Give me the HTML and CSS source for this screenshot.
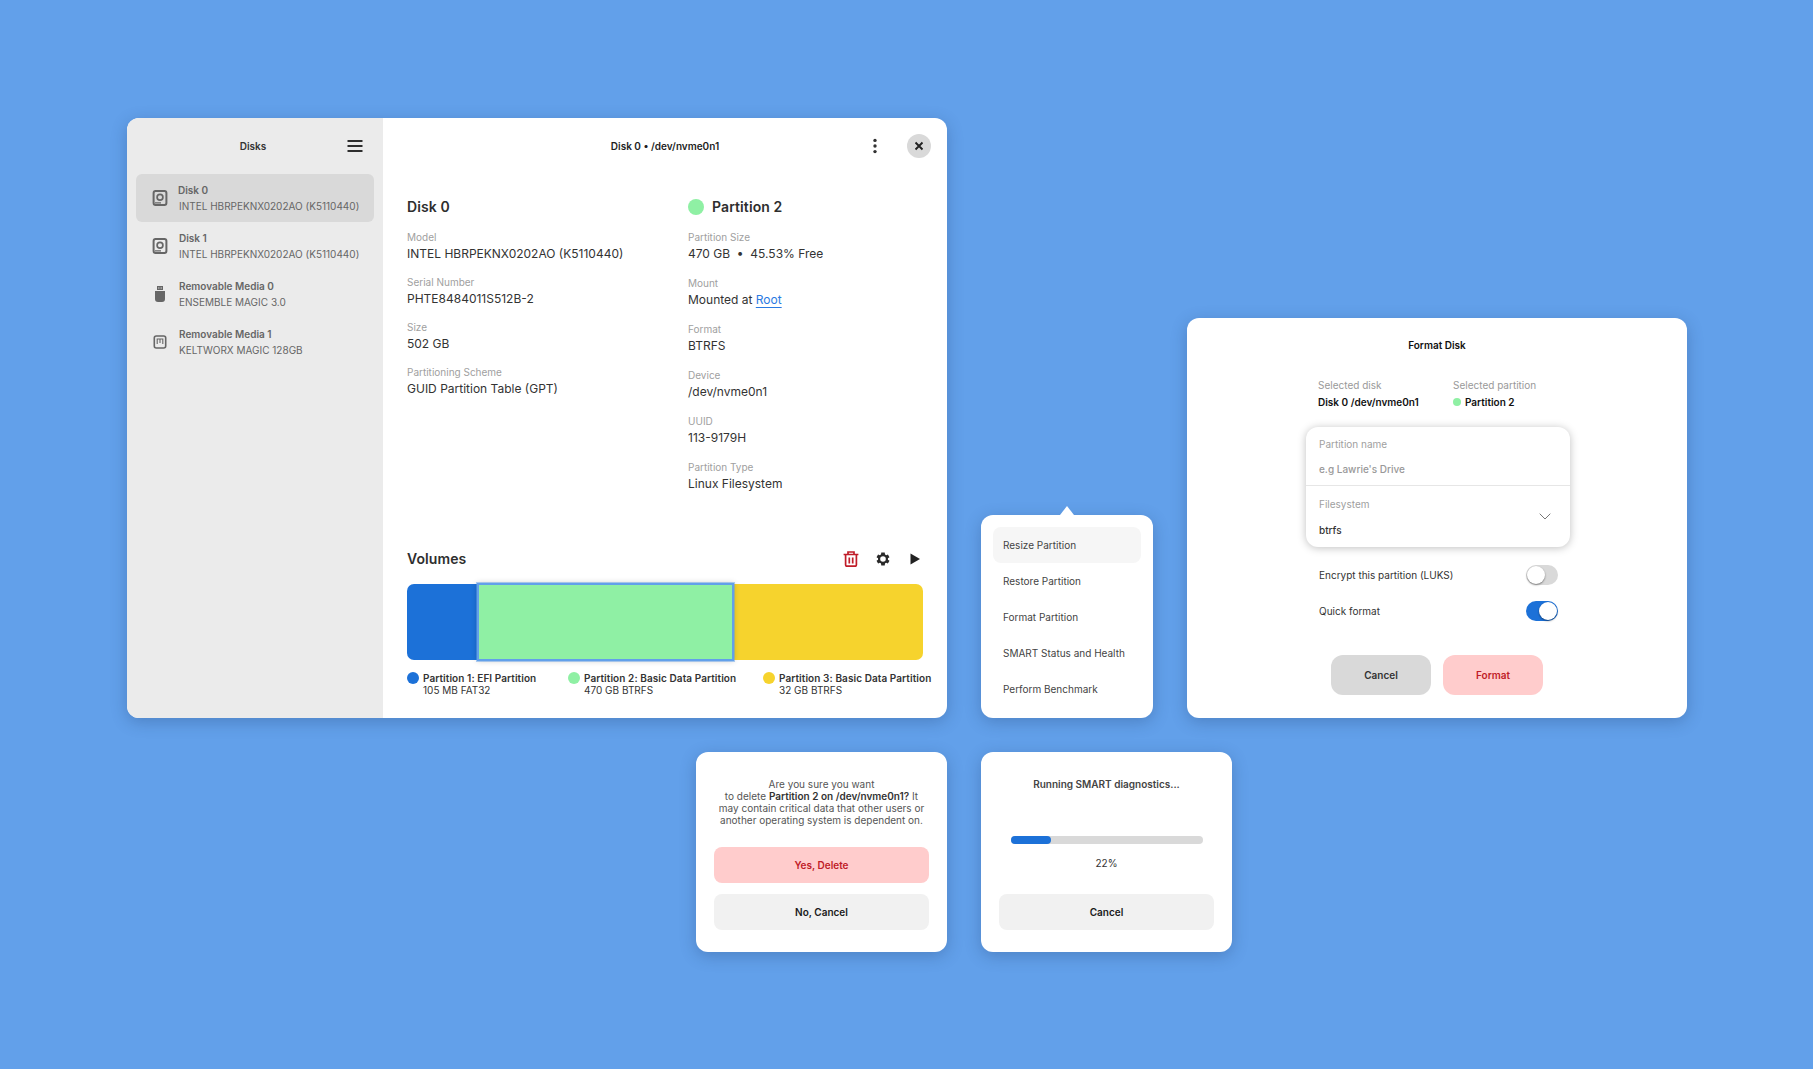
FILE: index.html
```html
<!DOCTYPE html>
<html>
  <head>
    <title>Disks</title>
    <link rel="stylesheet" href="styles.css">
  </head>
  <body>
    <div class="canvas">

      <!-- main window -->
      <div class="window main-window">
        <aside class="sidebar">
          <div class="sidebar-head">
            <span class="sidebar-title">Disks</span>
            <svg class="hamburger" width="16" height="14" viewBox="0 0 16 14"><path d="M.5 2h15M.5 7h15M.5 12h15" stroke="#2e2e2e" stroke-width="1.8" fill="none"/></svg>
          </div>
          <div class="disk-item selected">
            <svg class="disk-icon" width="16" height="16" viewBox="0 0 16 16"><rect x="1.6" y="1" width="12.800" height="14" rx="2" fill="none" stroke="#666" stroke-width="2"/><circle cx="8" cy="7.200" r="2.900" fill="none" stroke="#666" stroke-width="1.700"/><path d="M3 12.800h6" stroke="#666" stroke-width="1.200"/></svg>
            <div class="disk-text"><b>Disk 0</b><span>INTEL HBRPEKNX0202AO (K5110440)</span></div>
          </div>
          <div class="disk-item">
            <svg class="disk-icon" width="16" height="16" viewBox="0 0 16 16"><rect x="1.6" y="1" width="12.800" height="14" rx="2" fill="none" stroke="#666" stroke-width="2"/><circle cx="8" cy="7.200" r="2.900" fill="none" stroke="#666" stroke-width="1.700"/><path d="M3 12.800h6" stroke="#666" stroke-width="1.200"/></svg>
            <div class="disk-text"><b>Disk 1</b><span>INTEL HBRPEKNX0202AO (K5110440)</span></div>
          </div>
          <div class="disk-item">
            <svg class="disk-icon" width="16" height="16" viewBox="0 0 16 16"><path d="M5 0h6v4H5z" fill="#666"/><path d="M6.200 1.400h1.200v1.200H6.200zM8.600 1.400h1.200v1.200H8.600z" fill="#ebebeb"/><path d="M3 5h10v8a3 3 0 0 1-3 3H6a3 3 0 0 1-3-3z" fill="#666"/></svg>
            <div class="disk-text"><b>Removable Media 0</b><span>ENSEMBLE MAGIC 3.0</span></div>
          </div>
          <div class="disk-item">
            <svg class="disk-icon" width="16" height="16" viewBox="0 0 16 16"><rect x="2.300" y="2" width="11.400" height="12" rx="2" fill="none" stroke="#666" stroke-width="1.600"/><path d="M5.200 10V5h5.600v5M8 5v4" fill="none" stroke="#666" stroke-width="1.100"/></svg>
            <div class="disk-text"><b>Removable Media 1</b><span>KELTWORX MAGIC 128GB</span></div>
          </div>
        </aside>

        <section class="pane">
          <header class="pane-head">
            <span class="pane-title">Disk 0 • /dev/nvme0n1</span>
            <svg class="kebab" width="4" height="16" viewBox="0 0 4 16"><circle cx="2" cy="2.400" r="1.700" fill="#333"/><circle cx="2" cy="8" r="1.700" fill="#333"/><circle cx="2" cy="13.600" r="1.700" fill="#333"/></svg>
            <span class="close-btn"><svg width="10" height="10" viewBox="0 0 10 10"><path d="M1.500 1.500l7 7M8.500 1.500l-7 7" stroke="#222" stroke-width="1.900" fill="none"/></svg></span>
          </header>

          <div class="details">
            <div class="col col-disk">
              <h2>Disk 0</h2>
              <div class="field"><label>Model</label><p>INTEL HBRPEKNX0202AO (K5110440)</p></div>
              <div class="field"><label>Serial Number</label><p>PHTE8484011S512B-2</p></div>
              <div class="field"><label>Size</label><p>502 GB</p></div>
              <div class="field"><label>Partitioning Scheme</label><p>GUID Partition Table (GPT)</p></div>
            </div>
            <div class="col col-part">
              <h2><i class="dot dot-big green"></i>Partition 2</h2>
              <div class="field"><label>Partition Size</label><p>470 GB &nbsp;•&nbsp; 45.53% Free</p></div>
              <div class="field"><label>Mount</label><p>Mounted at <a href="#">Root</a></p></div>
              <div class="field"><label>Format</label><p>BTRFS</p></div>
              <div class="field"><label>Device</label><p>/dev/nvme0n1</p></div>
              <div class="field"><label>UUID</label><p>113-9179H</p></div>
              <div class="field"><label>Partition Type</label><p>Linux Filesystem</p></div>
            </div>
          </div>

          <div class="volumes">
            <div class="volumes-head">
              <h2>Volumes</h2>
              <svg width="16" height="16" viewBox="0 0 16 16"><path d="M.6 3.500h14.800M5 3.200V1h6v2.200M2.600 3.500v10.300A1.400 1.400 0 0 0 4 15.200h8a1.400 1.400 0 0 0 1.400-1.400V3.500M6.300 6.500v6M9.700 6.500v6" fill="none" stroke="#c01c28" stroke-width="1.700"/></svg>
              <svg width="16" height="16" viewBox="0 0 24 24"><path fill="#2a2a2a" d="M19.400 13a7.500 7.500 0 0 0 0-2l2.300-1.800-2.300-4-2.700 1.100a7.500 7.500 0 0 0-1.700-1l-.4-2.900H9.400L9 5.300a7.500 7.500 0 0 0-1.700 1L4.600 5.200l-2.300 4L4.600 11a7.500 7.500 0 0 0 0 2l-2.300 1.800 2.300 4 2.700-1.100a7.500 7.500 0 0 0 1.700 1l.4 2.900h5.200l.4-2.900a7.500 7.500 0 0 0 1.700-1l2.700 1.100 2.300-4zM12 16.200a4.200 4.200 0 1 1 0-8.400 4.200 4.200 0 0 1 0 8.400z"/></svg>
              <svg width="16" height="16" viewBox="0 0 16 16"><path d="M3.500 2.500v11L13 8z" fill="#222"/></svg>
            </div>
            <div class="bar">
              <div class="bar-seg seg-blue"></div>
              <div class="bar-seg seg-green"></div>
              <div class="bar-seg seg-yellow"></div>
            </div>
            <div class="legend">
              <div class="legend-item"><i class="dot blue"></i><div><b>Partition 1: EFI Partition</b><span>105 MB FAT32</span></div></div>
              <div class="legend-item"><i class="dot green"></i><div><b>Partition 2: Basic Data Partition</b><span>470 GB BTRFS</span></div></div>
              <div class="legend-item"><i class="dot yellow"></i><div><b>Partition 3: Basic Data Partition</b><span>32 GB BTRFS</span></div></div>
            </div>
          </div>
        </section>
      </div>

      <!-- popover menu -->
      <div class="window popover">
        <div class="menu-item active">Resize Partition</div>
        <div class="menu-item">Restore Partition</div>
        <div class="menu-item">Format Partition</div>
        <div class="menu-item">SMART Status and Health</div>
        <div class="menu-item">Perform Benchmark</div>
      </div>

      <!-- format dialog -->
      <div class="window format-dialog">
        <div class="dialog-title">Format Disk</div>
        <div class="selected-row">
          <div class="selected-col sel-disk"><label>Selected disk</label><b>Disk 0 /dev/nvme0n1</b></div>
          <div class="selected-col"><label>Selected partition</label><b><i class="dot dot-small green"></i>Partition 2</b></div>
        </div>
        <div class="form-card">
          <div class="form-row">
            <label>Partition name</label>
            <span class="placeholder">e.g Lawrie's Drive</span>
          </div>
          <div class="form-row form-select">
            <label>Filesystem</label>
            <span class="form-value">btrfs</span>
            <svg class="chevron" width="12" height="7" viewBox="0 0 12 7"><path d="M.7.7L6 6l5.300-5.300" fill="none" stroke="#777" stroke-width="1"/></svg>
          </div>
        </div>
        <div class="toggle-row"><span>Encrypt this partition (LUKS)</span><i class="toggle"></i></div>
        <div class="toggle-row"><span>Quick format</span><i class="toggle on"></i></div>
        <div class="format-actions">
          <button class="btn btn-grey">Cancel</button>
          <button class="btn btn-danger">Format</button>
        </div>
      </div>

      <!-- delete confirm -->
      <div class="window small-dialog delete-dialog">
        <p class="confirm-text">Are you sure you want<br>to delete <b>Partition 2 on /dev/nvme0n1?</b> It may contain critical data that other users or another operating system is dependent on.</p>
        <button class="btn btn-danger btn-wide">Yes, Delete</button>
        <button class="btn btn-light btn-wide">No, Cancel</button>
      </div>

      <!-- smart progress -->
      <div class="window small-dialog smart-dialog">
        <p class="smart-title">Running SMART diagnostics...</p>
        <div class="progress"><div class="progress-fill" style="width: 21%"></div></div>
        <p class="progress-label">22%</p>
        <button class="btn btn-light btn-wide">Cancel</button>
      </div>

    </div>
  </body>
</html>
```

FILE: styles.css
```css
* {
  box-sizing: border-box;
}

body {
  margin: 0;
  background-color: #62A0EA;
  font-family: Inter, "Noto Sans", sans-serif;
  overflow: hidden;
}

.canvas {
  position: relative;
  width: 1813px;
  height: 1069px;
}

.window {
  position: absolute;
  background: #fff;
  border-radius: 12px;
  box-shadow: 0 4px 16px rgba(30, 60, 110, 0.3);
}

/* main window */
.main-window {
  left: 127px;
  top: 118px;
  width: 820px;
  height: 600px;
  display: flex;
  overflow: hidden;
}

.sidebar {
  width: 256px;
  background: #ebebeb;
  padding: 0 9px;
}

.sidebar-head {
  height: 56px;
  display: flex;
  align-items: center;
  justify-content: center;
  position: relative;
}

.sidebar-title {
  font-size: 10px;
  font-weight: 600;
  color: #333;
  margin-right: 4px;
}

.hamburger {
  position: absolute;
  right: 11px;
  top: 21px;
}

.disk-item {
  height: 48px;
  display: flex;
  align-items: center;
  border-radius: 6px;
  padding-left: 16px;
  color: #666;
}

.disk-item.selected {
  background: #d9d9d9;
}

.disk-icon {
  flex: none;
}

.disk-text {
  margin-left: 11px;
  display: flex;
  flex-direction: column;
  gap: 4px;
}

.disk-text b {
  font-size: 10px;
  line-height: 12px;
  font-weight: 600;
}

.disk-item.selected b {
  margin-left: -1px;
}

.disk-text span {
  font-size: 10px;
  line-height: 12px;
}

.pane {
  flex: 1;
  padding: 0 24px;
  display: flex;
  flex-direction: column;
}

.pane-head {
  height: 56px;
  display: flex;
  align-items: center;
  position: relative;
  justify-content: center;
}

.pane-title {
  font-size: 10px;
  font-weight: 600;
  color: #1e1e1e;
}

.kebab {
  position: absolute;
  right: 46px;
  top: 20px;
}

.close-btn {
  position: absolute;
  right: -8px;
  top: 16px;
  width: 24px;
  height: 24px;
  border-radius: 50%;
  background: #d9d9d9;
  display: flex;
  align-items: center;
  justify-content: center;
}

.details {
  display: flex;
  margin-top: 23px;
  height: 352px;
}

.col-disk {
  width: 281px;
}

h2 {
  margin: 0;
  font-size: 14px;
  line-height: 20px;
  font-weight: 600;
  letter-spacing: 0.1px;
  color: #2e2e2e;
  display: flex;
  align-items: center;
}

.col h2 {
  margin-bottom: 13px;
}

.field {
  margin-bottom: 12px;
}

.col-part .field {
  margin-bottom: 13px;
}

.field label {
  display: block;
  font-size: 10px;
  line-height: 14px;
  color: #a0a0a0;
}

.field p {
  margin: 1px 0 0;
  font-size: 12px;
  line-height: 18px;
  color: #333;
}

.field a {
  color: #2a7ae2;
  text-decoration: underline;
  text-decoration-thickness: 1px;
  text-underline-offset: 3px;
}

.dot {
  display: block;
  flex: none;
  width: 12px;
  height: 12px;
  border-radius: 50%;
}

.dot-big {
  width: 16px;
  height: 16px;
  margin-right: 8px;
}

.dot-small {
  width: 8px;
  height: 8px;
  margin-right: 4px;
}

.green { background: #8ff0a4; }
.blue { background: #1c71d8; }
.yellow { background: #f6d32d; }

.volumes-head {
  display: flex;
  align-items: center;
  height: 20px;
}

.volumes-head h2 {
  flex: 1;
}

.volumes-head svg {
  margin-left: 16px;
}

.bar {
  margin-top: 15px;
  height: 76px;
  display: flex;
}

.bar-seg {
  height: 100%;
}

.seg-blue {
  width: 70px;
  background: #1c71d8;
  border-radius: 7px 0 0 7px;
}

.seg-green {
  width: 257px;
  height: 78px;
  margin-top: -1px;
  background: #8ff0a4;
  border: 2px solid #62a0ea;
  box-shadow: 0 0 0 1px rgba(98, 160, 234, 0.5), 0 0 6px rgba(0, 0, 0, 0.2);
  position: relative;
}

.seg-yellow {
  flex: 1;
  background: #f6d32d;
  border-radius: 0 7px 7px 0;
}

.legend {
  display: grid;
  grid-template-columns: 161px 195px auto;
  margin-top: 12px;
  margin-right: -12px;
}

.legend-item {
  display: flex;
  gap: 4px;
  color: #333;
}

.legend-item b {
  display: block;
  font-size: 10px;
  line-height: 12px;
  font-weight: 600;
  letter-spacing: 0.08px;
}

.legend-item span {
  display: block;
  font-size: 10px;
  line-height: 12px;
}

/* popover */
.popover {
  left: 981px;
  top: 515px;
  width: 172px;
  height: 203px;
  padding: 12px;
}

.popover::before {
  content: "";
  position: absolute;
  left: 79px;
  top: -9px;
  border-left: 7px solid transparent;
  border-right: 7px solid transparent;
  border-bottom: 9px solid #fff;
}

.menu-item {
  height: 36px;
  border-radius: 8px;
  padding-left: 10px;
  display: flex;
  align-items: center;
  font-size: 10px;
  color: #444;
}

.menu-item.active {
  background: #f6f6f6;
}

/* format dialog */
.format-dialog {
  left: 1187px;
  top: 318px;
  width: 500px;
  height: 400px;
  padding: 20px 0 0 131px;
}

.dialog-title {
  font-size: 10px;
  font-weight: 600;
  line-height: 14px;
  color: #111;
  margin-left: -131px;
  text-align: center;
}

.selected-row {
  display: flex;
  margin-top: 26px;
}

.sel-disk {
  width: 135px;
}

.selected-col label {
  display: block;
  font-size: 10px;
  line-height: 14px;
  color: #999;
}

.selected-col b {
  display: flex;
  align-items: center;
  margin-top: 3px;
  font-size: 10px;
  line-height: 14px;
  font-weight: 600;
  color: #111;
}

.form-card {
  width: 264px;
  margin: 18px 0 0 -12px;
  border-radius: 12px;
  box-shadow: 0 1px 8px rgba(0, 0, 0, 0.25);
}

.form-row {
  position: relative;
  padding: 11px 13px 0;
  height: 61px;
}

.form-row:first-child {
  height: 59px;
  padding-top: 10px;
  border-bottom: 1px solid #e6e6e6;
}

.form-row label {
  display: block;
  font-size: 10px;
  line-height: 14px;
  color: #a0a0a0;
}

.placeholder,
.form-value {
  display: block;
  margin-top: 11px;
  font-size: 10px;
  line-height: 14px;
  font-weight: 500;
  color: #999;
}

.form-value {
  margin-top: 12px;
  color: #333;
}

.chevron {
  position: absolute;
  right: 19px;
  top: 27px;
}

.toggle-row {
  width: 239px;
  height: 20px;
  margin: 18px 0 0 1px;
  display: flex;
  align-items: center;
  justify-content: space-between;
  font-size: 10px;
  color: #333;
}

.toggle-row + .toggle-row {
  margin-top: 16px;
}

.toggle {
  display: block;
  position: relative;
  width: 32px;
  height: 20px;
  border-radius: 10px;
  background: #d9d9d9;
}

.toggle::after {
  content: "";
  position: absolute;
  left: 1px;
  top: 1px;
  width: 18px;
  height: 18px;
  border-radius: 50%;
  background: #fff;
  box-shadow: 0 1px 2px rgba(0, 0, 0, 0.45);
}

.toggle.on {
  background: #1c71d8;
}

.toggle.on::after {
  left: 13px;
}

.format-actions {
  display: flex;
  gap: 12px;
  margin-top: 34px;
  margin-left: 13px;
}

.btn {
  width: 100px;
  height: 40px;
  border: none;
  border-radius: 12px;
  font-family: inherit;
  font-size: 10px;
  font-weight: 600;
}

.btn-grey {
  background: #d9d9d9;
  color: #333;
}

.btn-danger {
  background: #ffcccc;
  color: #c01c28;
}

.btn-light {
  background: #f1f1f1;
  color: #1a1a1a;
}

/* small dialogs */
.small-dialog {
  top: 752px;
  width: 251px;
  height: 200px;
  padding: 26px 18px 0;
  display: flex;
  flex-direction: column;
  align-items: center;
}

.delete-dialog {
  left: 696px;
}

.smart-dialog {
  left: 981px;
}

.confirm-text {
  margin: 0 0 21px;
  height: 48px;
  text-align: center;
  font-size: 10px;
  line-height: 12px;
  color: #555;
}

.confirm-text b {
  font-weight: 600;
  color: #333;
}

.btn-wide {
  width: 215px;
  height: 36px;
  flex: none;
  border-radius: 8px;
  margin-bottom: 11px;
}

.smart-title {
  margin: 0;
  font-size: 10px;
  line-height: 12px;
  font-weight: 600;
  color: #444;
}

.progress {
  margin-top: 46px;
  width: 192px;
  height: 8px;
  border-radius: 4px;
  background: #d9d9d9;
  flex: none;
}

.progress-fill {
  height: 100%;
  border-radius: 4px;
  background: #1c71d8;
}

.progress-label {
  margin: 13px 0 25px;
  font-size: 10px;
  line-height: 12px;
  color: #333;
}
```
